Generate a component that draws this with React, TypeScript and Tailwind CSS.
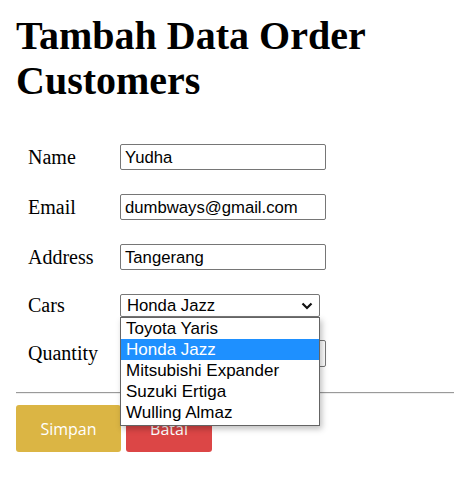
import React from "react";

const serif = { fontFamily: '"Liberation Serif", "Times New Roman", serif' };
const sans = { fontFamily: '"Liberation Sans", Arial, sans-serif' };

function Label({ text }: { text: string }) {
  return (
    <div className="w-[104px] pl-[12px] text-[20px] leading-[23px] text-black" style={serif}>
      {text}
    </div>
  );
}

function Field({ label, value, top }: { label: string; value: string; top: string }) {
  return (
    <div className={`flex items-center h-[26px] ${top}`}>
      <Label text={label} />
      <div
        className="w-[206px] h-[26px] border border-[#767676] rounded-[2px] px-[4px] flex items-center text-[16.7px] leading-[19px] text-black"
        style={sans}
      >
        {value}
      </div>
    </div>
  );
}

export default function App() {
  const cars = ["Toyota Yaris", "Honda Jazz", "Mitsubishi Expander", "Suzuki Ertiga", "Wulling Almaz"];
  return (
    <div className="relative w-[472px] h-[489px] bg-white px-[16px]">
      <h1 className="pt-[13px] text-[40px] leading-[45px] font-bold text-black" style={serif}>
        Tambah Data Order Customers
      </h1>
      <div className="flex flex-col">
        <Field label="Name" value="Yudha" top="mt-[41px]" />
        <Field label="Email" value="dumbways@gmail.com" top="mt-[24px]" />
        <Field label="Address" value="Tangerang" top="mt-[24px]" />
        <div className="flex items-center h-[23px] mt-[24px]">
          <Label text="Cars" />
          <div
            className="w-[200px] h-[23px] border border-[#767676] rounded-[2px] pl-[6px] pr-[6px] flex items-center justify-between text-[16.7px] leading-[19px] text-black"
            style={sans}
          >
            <span>Honda Jazz</span>
            <svg width="12" height="8" viewBox="0 0 12 8">
              <path d="M1.5 1.5 L6 6 L10.5 1.5" fill="none" stroke="#111" strokeWidth="2.2" />
            </svg>
          </div>
        </div>
        <div className="flex items-center h-[27px] mt-[23px]">
          <Label text="Quantity" />
          <div className="w-[206px] h-[27px] border border-[#767676] rounded-[2px]" />
        </div>
      </div>
      <div className="mt-[25px] w-[438px] border-t border-[#9a9a9a] border-b border-b-[#eeeeee]" />
      <div className="flex gap-[5px] mt-[11px]">
        <div
          className="w-[105px] h-[47px] rounded-[3px] bg-[#dbb544] text-white text-[16px] flex items-center justify-center"
          style={{ fontFamily: '"Open Sans", sans-serif' }}
        >
          Simpan
        </div>
        <div
          className="w-[86px] h-[47px] rounded-[3px] bg-[#dc4646] text-white text-[16px] flex items-center justify-center"
          style={{ fontFamily: '"Open Sans", sans-serif' }}
        >
          Batal
        </div>
      </div>
      <div
        className="absolute left-[120px] top-[317px] w-[200px] bg-white border border-[#646464] shadow-[2px_3px_6px_rgba(0,0,0,0.25)] pb-[2px] text-[17px] text-black"
        style={sans}
      >
        {cars.map((c) => (
          <div
            key={c}
            className={`h-[21px] leading-[21px] pl-[5px] ${c === "Honda Jazz" ? "bg-[#1e90ff] text-white" : ""}`}
          >
            {c}
          </div>
        ))}
      </div>
    </div>
  );
}
